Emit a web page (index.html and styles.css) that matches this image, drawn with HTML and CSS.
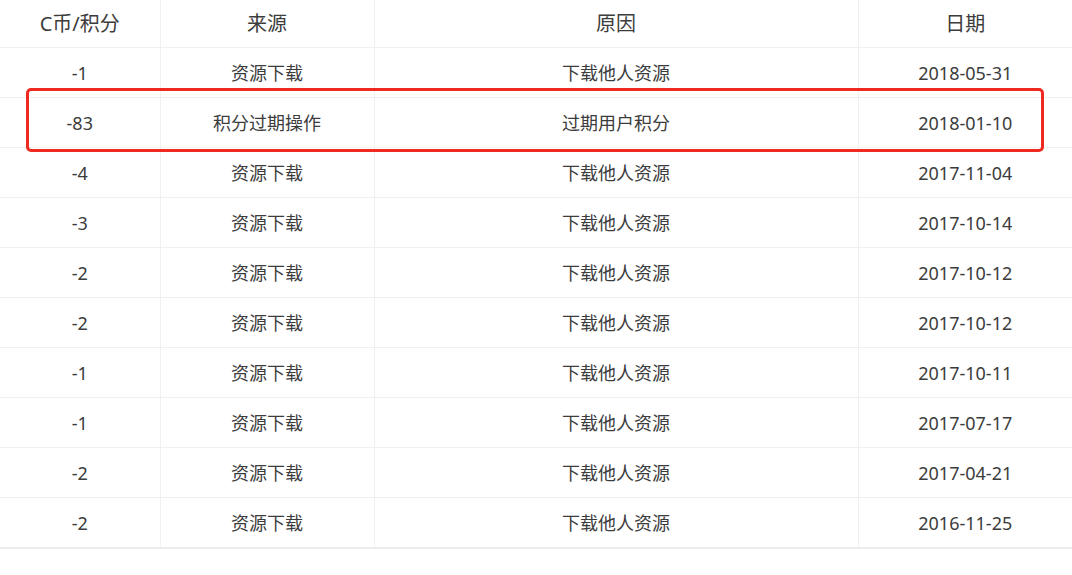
FILE: index.html
```html
<!DOCTYPE html>
<html lang="zh-CN">
<head>
<meta charset="utf-8">
<title>C币/积分</title>
<link rel="stylesheet" href="styles.css">
</head>
<body>
<div class="wrap">
  <table class="log">
    <colgroup>
      <col class="c1"><col class="c2"><col class="c3"><col class="c4">
    </colgroup>
    <thead>
      <tr><th>C币/积分</th><th>来源</th><th>原因</th><th>日期</th></tr>
    </thead>
    <tbody>
      <tr><td>-1</td><td>资源下载</td><td>下载他人资源</td><td>2018-05-31</td></tr>
      <tr><td>-83</td><td>积分过期操作</td><td>过期用户积分</td><td>2018-01-10</td></tr>
      <tr><td>-4</td><td>资源下载</td><td>下载他人资源</td><td>2017-11-04</td></tr>
      <tr><td>-3</td><td>资源下载</td><td>下载他人资源</td><td>2017-10-14</td></tr>
      <tr><td>-2</td><td>资源下载</td><td>下载他人资源</td><td>2017-10-12</td></tr>
      <tr><td>-2</td><td>资源下载</td><td>下载他人资源</td><td>2017-10-12</td></tr>
      <tr><td>-1</td><td>资源下载</td><td>下载他人资源</td><td>2017-10-11</td></tr>
      <tr><td>-1</td><td>资源下载</td><td>下载他人资源</td><td>2017-07-17</td></tr>
      <tr><td>-2</td><td>资源下载</td><td>下载他人资源</td><td>2017-04-21</td></tr>
      <tr><td>-2</td><td>资源下载</td><td>下载他人资源</td><td>2016-11-25</td></tr>
    </tbody>
  </table>
  <div class="mark"></div>
</div>
</body>
</html>
```
FILE: styles.css
```css
html, body {
  margin: 0;
  padding: 0;
  background: #ffffff;
}
body {
  font-family: "Noto Sans", "Noto Sans CJK SC", sans-serif;
  color: #3c3c3c;
}
.wrap {
  position: relative;
  width: 1072px;
}
.log {
  width: 1072px;
  border-collapse: collapse;
  table-layout: fixed;
  border-bottom: 2px solid #ececec;
}
.c1 { width: 160px; }
.c2 { width: 214px; }
.c3 { width: 484px; }
.c4 { width: 214px; }
.log th,
.log td {
  padding: 0;
  text-align: center;
  font-weight: 400;
  border-bottom: 1px solid #f0f0f0;
  border-right: 1px solid #f0f0f0;
  white-space: nowrap;
}
.log th:last-child,
.log td:last-child {
  border-right: none;
}
.log th {
  height: 46px;
  padding-top: 1px;
  font-size: 20px;
  line-height: 46px;
}
.log td {
  height: 47px;
  padding-top: 2px;
  font-size: 18px;
  line-height: 47px;
}
.log tbody tr:last-child td {
  border-bottom: none;
}
.mark {
  position: absolute;
  left: 26px;
  top: 88px;
  width: 1018px;
  height: 64px;
  box-sizing: border-box;
  border: 3px solid #ee2a20;
  border-radius: 5px;
}
```
